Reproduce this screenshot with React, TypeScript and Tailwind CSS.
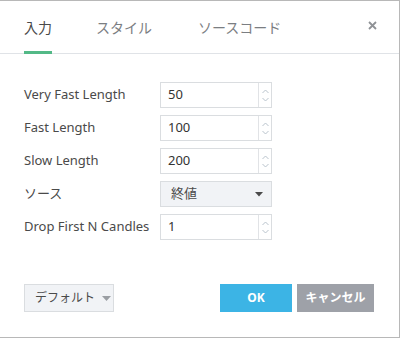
import React from "react";

const font = { fontFamily: '"Noto Sans", "Noto Sans CJK JP", sans-serif' };

const rows = [
  { label: "Very Fast Length", value: "50" },
  { label: "Fast Length", value: "100" },
  { label: "Slow Length", value: "200" },
  { label: "ソース", value: "終値", select: true },
  { label: "Drop First N Candles", value: "1" },
];

function Spinner() {
  return (
    <div className="flex flex-col w-[13px] border-l border-[#e1e3e6] h-full items-center justify-center gap-[3px]">
      <svg width="7" height="5" viewBox="0 0 7 5" fill="none" stroke="#b9c3cc" strokeWidth="1">
        <path d="M0.5 4 L3.5 1 L6.5 4" />
      </svg>
      <svg width="7" height="5" viewBox="0 0 7 5" fill="none" stroke="#b9c3cc" strokeWidth="1">
        <path d="M0.5 1 L3.5 4 L6.5 1" />
      </svg>
    </div>
  );
}

export default function App() {
  return (
    <div
      style={font}
      className="w-[400px] h-[338px] bg-white border-t border-r border-b border-[#b8b8b8] flex flex-col"
    >
      {/* tabs */}
      <div className="h-[53px] border-b border-[#e0e3e7] flex items-center pl-[24px] pr-[22px] text-[14px] shrink-0">
        <div className="relative h-full flex items-center text-[#4a4a4a]">
          入力
          <span className="absolute left-0 right-0 bottom-[-1px] h-[3px] bg-[#53b987]" />
        </div>
        <div className="ml-[44px] text-[#7b7e82]">スタイル</div>
        <div className="ml-[46px] text-[#7b7e82]">ソースコード</div>
        <div className="flex-1" />
        <svg width="9" height="9" viewBox="0 0 9 9" className="mb-[3px]" stroke="#8f9296" strokeWidth="1.8">
          <path d="M1 1 L8 8 M8 1 L1 8" />
        </svg>
      </div>

      {/* form */}
      <div className="flex flex-col gap-[7px] pt-[28px] pl-[24px] text-[13px]">
        {rows.map((r) => (
          <div key={r.label} className="flex items-center h-[26px]">
            <div className="w-[136px] text-[#4a4a4a] whitespace-nowrap">{r.label}</div>
            {r.select ? (
              <div className="w-[112px] h-[26px] border border-[#dadde0] bg-[#f1f3f6] flex items-center pl-[10px] pr-[8px] text-[#4a4a4a]">
                <span className="flex-1">{r.value}</span>
                <svg width="8" height="5" viewBox="0 0 8 5">
                  <path d="M0 0 H8 L4 4.5 Z" fill="#4a4a4a" />
                </svg>
              </div>
            ) : (
              <div className="w-[112px] h-[26px] border border-[#dadde0] bg-white flex items-center text-[#333]">
                <span className="flex-1 pl-[7px]">{r.value}</span>
                <Spinner />
              </div>
            )}
          </div>
        ))}
      </div>

      <div className="flex-1" />

      {/* footer */}
      <div className="flex items-center pl-[24px] pr-[25px] pb-[25px] text-[12px]">
        <div className="h-[28px] w-[90px] border border-[#dadde0] bg-[#f1f3f6] flex items-center pl-[10px] gap-[7px] text-[#4a4a4a] whitespace-nowrap">
          <span>デフォルト</span>
          <svg width="9" height="5" viewBox="0 0 9 5">
            <path d="M0 0 H9 L4.5 5 Z" fill="#9a9ea3" />
          </svg>
        </div>
        <div className="flex-1" />
        <div className="h-[28px] w-[72px] bg-[#3cb4e5] text-white font-bold flex items-center justify-center">
          OK
        </div>
        <div className="h-[28px] w-[77px] ml-[5px] bg-[#9ea1a8] text-white font-bold flex items-center justify-center whitespace-nowrap">
          キャンセル
        </div>
      </div>
    </div>
  );
}
